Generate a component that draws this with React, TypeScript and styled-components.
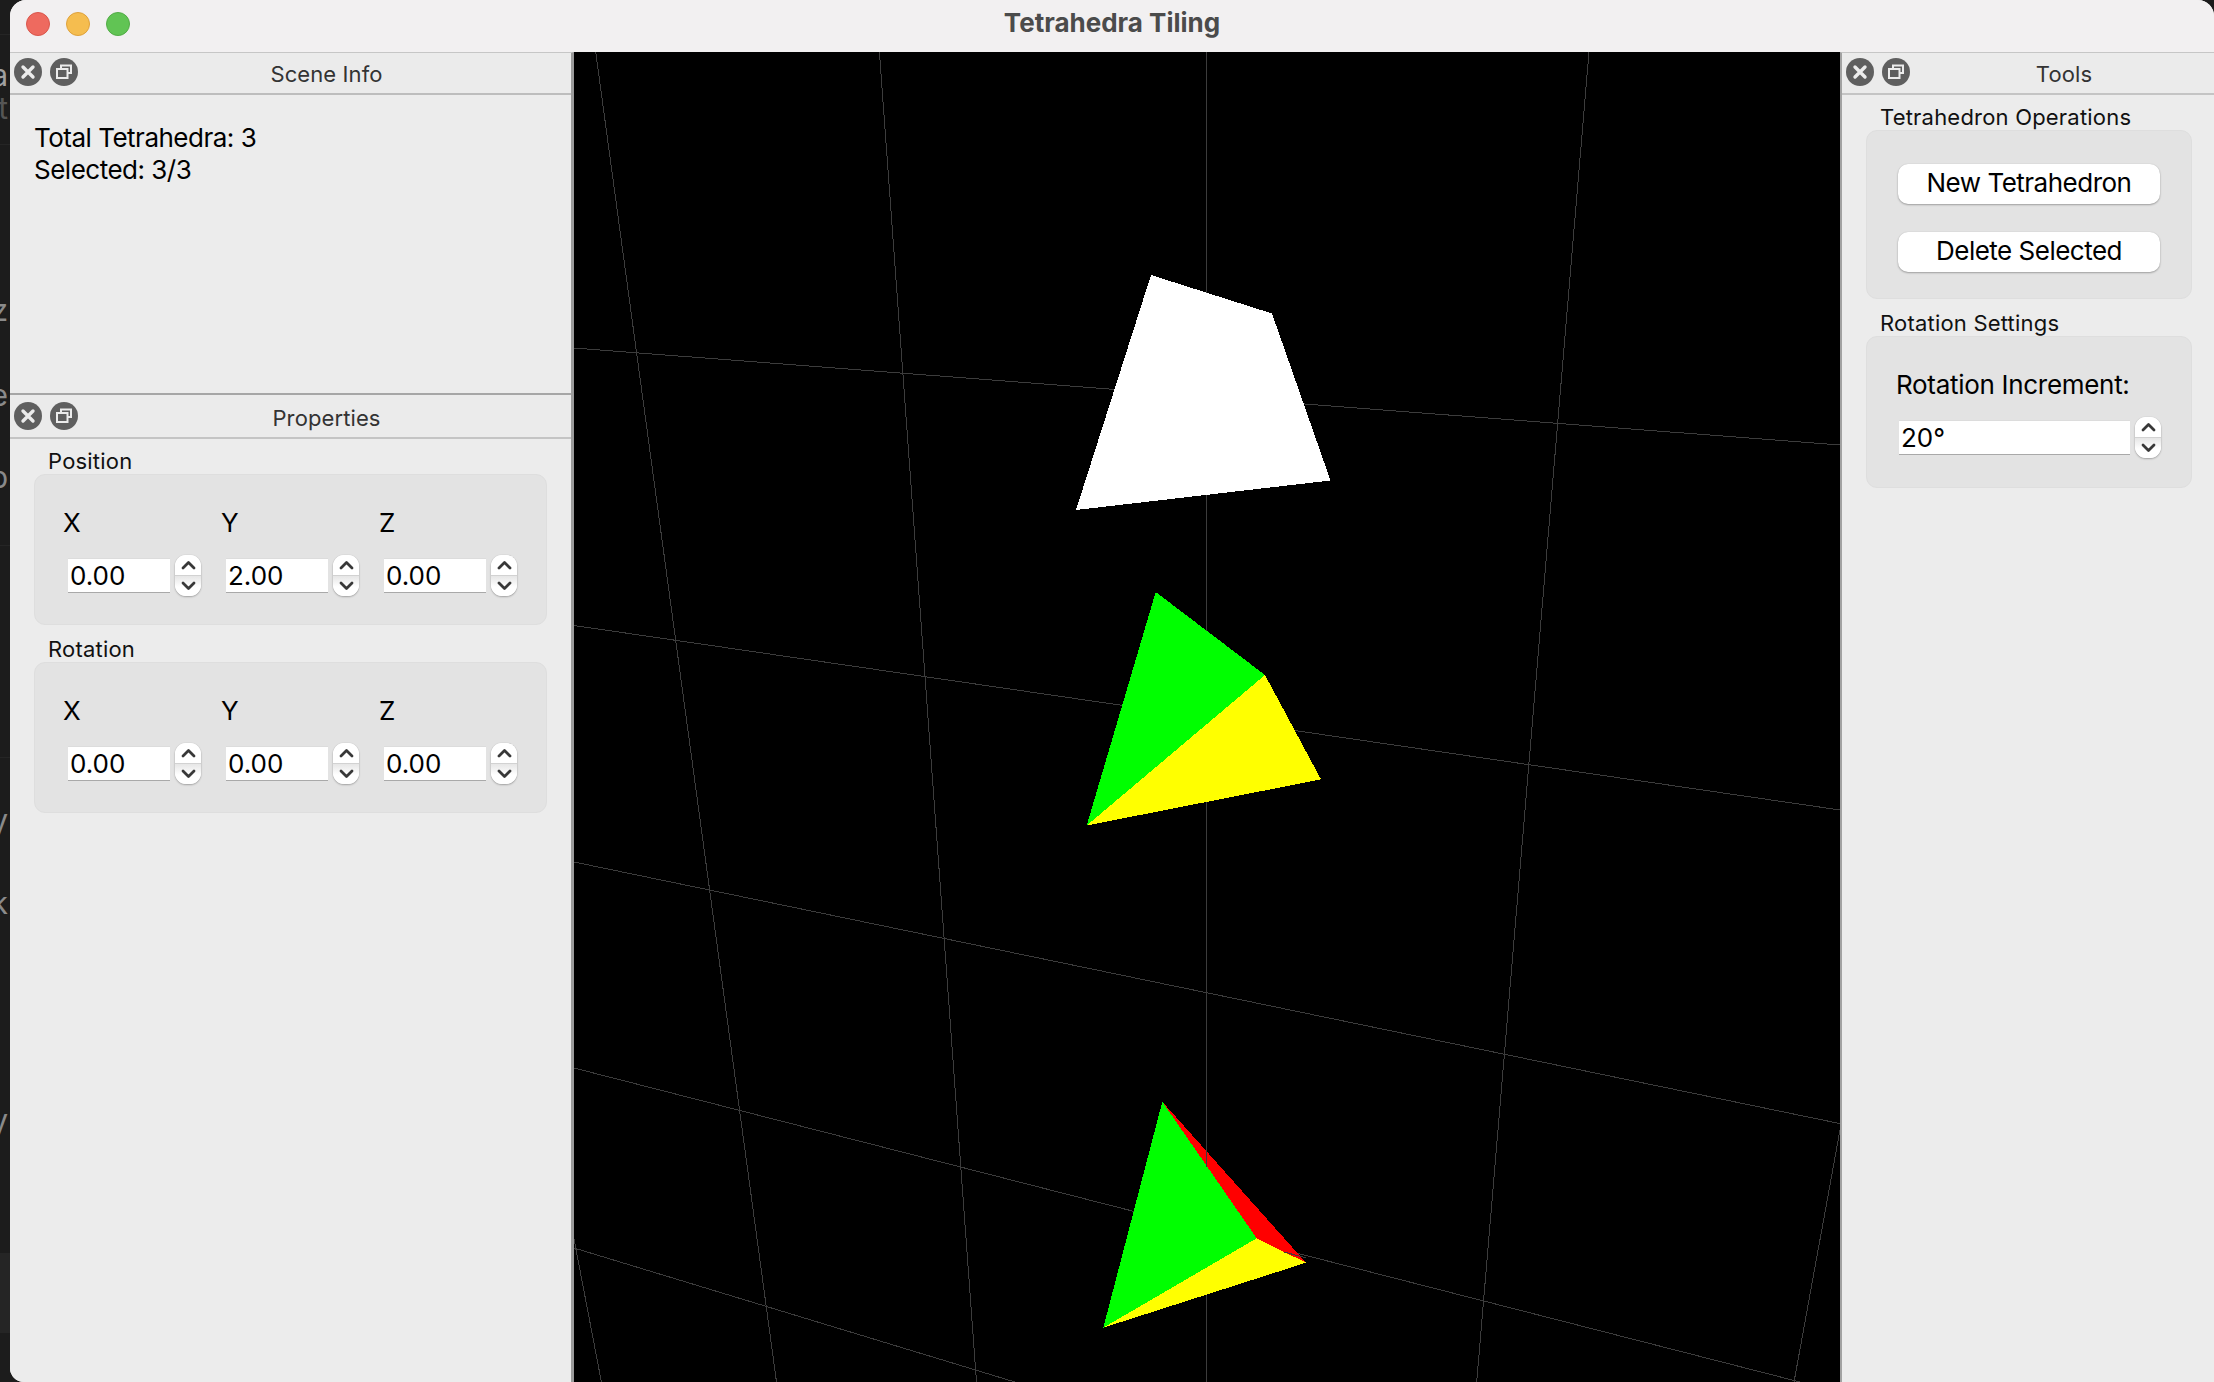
import React from "react";
import styled, { createGlobalStyle } from "styled-components";

const GlobalStyle = createGlobalStyle`
  html, body { margin: 0; padding: 0; background: #1c1c1c; }
  * { box-sizing: border-box; }
  body { font-family: Inter, "Noto Sans", "Liberation Sans", sans-serif; }
`;

const Desktop = styled.div`
  display: flex;
  width: 2214px;
  height: 1382px;
  background: #1c1c1c;
  overflow: hidden;
`;

const BackdropStrip = styled.div`
  position: relative;
  flex: 0 0 10px;
  overflow: hidden;
`;

const BackdropGlyph = styled.span<{ $top: number; $tone: string }>`
  position: absolute;
  right: 2px;
  top: ${(p) => p.$top}px;
  font-size: 30px;
  line-height: 30px;
  color: ${(p) => p.$tone};
`;

const BackdropBand = styled.div<{ $top: number; $height: number }>`
  position: absolute;
  left: 0;
  right: 0;
  top: ${(p) => p.$top}px;
  height: ${(p) => p.$height}px;
  background: #252525;
`;

const Window = styled.div`
  flex: 1;
  min-width: 0;
  display: flex;
  flex-direction: column;
  border-radius: 16px 16px 0 14px;
  overflow: hidden;
  background: #ececec;
`;

const TitleBar = styled.header`
  position: relative;
  flex: 0 0 52px;
  display: flex;
  align-items: center;
  gap: 16px;
  padding: 0 0 4px 16px;
  background: #f2f0f1;
`;

const Light = styled.span<{ $fill: string; $edge: string }>`
  width: 24px;
  height: 24px;
  border-radius: 50%;
  background: ${(p) => p.$fill};
  border: 1px solid ${(p) => p.$edge};
`;

const WindowTitle = styled.h1`
  position: absolute;
  left: 0;
  right: 0;
  top: 8px;
  margin: 0;
  text-align: center;
  font-size: 26px;
  line-height: 30px;
  font-weight: 700;
  color: #4b4b4b;
`;

const Body = styled.div`
  flex: 1;
  min-height: 0;
  display: flex;
`;

const LeftDock = styled.aside`
  flex: 0 0 564px;
  display: flex;
  flex-direction: column;
  background: #ececec;
  border-top: 1px solid #c6c6c6;
  border-right: 3px solid #9b9b9b;
`;

const Viewport = styled.main`
  flex: 0 0 1266px;
  background: #000;
`;

const Scene = styled.svg`
  display: block;
  width: 1266px;
  height: 1330px;
`;

const RightDock = styled.aside`
  flex: 1;
  min-width: 0;
  display: flex;
  flex-direction: column;
  background: #ececec;
  border-top: 1px solid #c6c6c6;
  border-left: 2px solid #a2a2a2;
`;

const DockHead = styled.div<{ $rule: string; $height: number; $lift: number }>`
  position: relative;
  flex: 0 0 ${(p) => p.$height}px;
  display: flex;
  align-items: center;
  gap: 8px;
  padding: 0 0 ${(p) => p.$lift}px 4px;
  background: #ebebeb;
  border-bottom: 2px solid ${(p) => p.$rule};
`;

const DockTitle = styled.div<{ $top: number }>`
  position: absolute;
  top: ${(p) => p.$top}px;
  left: 0;
  right: 0;
  padding-left: 72px;
  text-align: center;
  font-size: 22px;
  line-height: 28px;
  letter-spacing: 0.1px;
  color: #333;
`;

const DockButton = styled.span`
  flex: 0 0 28px;
  height: 28px;
  border-radius: 50%;
  background: #5f5f5f;
  display: flex;
  align-items: center;
  justify-content: center;
`;

const SceneInfoBody = styled.div`
  flex: 0 0 300px;
  padding: 27px 24px 0;
  font-size: 26px;
  line-height: 32px;
  letter-spacing: -0.5px;
  color: #000;
  border-bottom: 2px solid #a6a6a6;
`;

const InfoLine = styled.div`
  white-space: nowrap;
`;

const PanelBody = styled.div<{ $left: number }>`
  flex: 1;
  display: flex;
  flex-direction: column;
  padding: 9px 0 0 ${(p) => p.$left}px;
`;

const GroupLabel = styled.div`
  height: 26px;
  margin-left: 14px;
  font-size: 22px;
  line-height: 26px;
  letter-spacing: 0.2px;
  color: #111;
`;

const GroupBox = styled.section<{ $width: number; $height: number; $gap?: number }>`
  width: ${(p) => p.$width}px;
  height: ${(p) => p.$height}px;
  margin-bottom: ${(p) => p.$gap ?? 11}px;
  background: #e3e3e3;
  border: 1px solid #dedede;
  border-radius: 11px;
`;

const AxisGrid = styled.div`
  display: grid;
  grid-template-columns: repeat(3, 158px);
  padding: 33px 0 0 28px;
`;

const AxisCell = styled.div`
  display: flex;
  flex-direction: column;
`;

const FieldLabel = styled.div`
  height: 30px;
  margin-bottom: 17px;
  font-size: 26px;
  line-height: 30px;
  letter-spacing: -0.3px;
  color: #000;
`;

const FieldRow = styled.div<{ $indent: number }>`
  display: flex;
  align-items: center;
  gap: 5px;
  margin-left: ${(p) => p.$indent}px;
`;

const NumberInput = styled.input<{ $width: number }>`
  width: ${(p) => p.$width}px;
  height: 35px;
  padding: 0 0 0 2px;
  margin: 0;
  border: 0;
  border-bottom: 1px solid #a9a9a9;
  border-top: 1px solid #dcdcdc;
  outline: 0;
  border-radius: 0;
  background: #fff;
  font: inherit;
  font-size: 26px;
  line-height: 33px;
  color: #000;
`;

const SpinnerShell = styled.div`
  flex: 0 0 26px;
  height: 41px;
  display: flex;
  flex-direction: column;
  border-radius: 11px;
  overflow: hidden;
  background: #fff;
  box-shadow: 0 1px 2px rgba(0, 0, 0, 0.28), 0 0 1px rgba(0, 0, 0, 0.2);
`;

const SpinnerHalf = styled.div<{ $lower?: boolean }>`
  flex: 1;
  display: flex;
  align-items: center;
  justify-content: center;
  background: ${(p) => (p.$lower ? "linear-gradient(#e6e6e6, #fff 55%)" : "#fff")};
  border-top: ${(p) => (p.$lower ? "1px solid #d2d2d2" : "0")};
`;

const ButtonStack = styled.div`
  display: flex;
  flex-direction: column;
  gap: 28px;
  padding: 33px 0 0 31px;
`;

const ActionButton = styled.button`
  width: 262px;
  height: 40px;
  padding: 0 0 2px;
  border: 0;
  border-radius: 10px;
  background: #fff;
  box-shadow: 0 1px 2px rgba(0, 0, 0, 0.3), 0 0 1px rgba(0, 0, 0, 0.15);
  font: inherit;
  font-size: 26px;
  line-height: 38px;
  letter-spacing: -0.5px;
  color: #000;
`;

const SettingBlock = styled.div`
  display: flex;
  flex-direction: column;
  padding: 33px 0 0 29px;
`;

const gridLines = [
  [595.7, 52, 776.5, 1382],
  [879.4, 52, 976.5, 1382],
  [1206, 52, 1206, 1382],
  [1589, 52, 1476.7, 1382],
  [1840, 1130, 1794, 1382],
  [574, 1239, 601.4, 1382],
  [574, 348, 1840, 445],
  [574, 625.5, 1840, 810],
  [574, 862, 1840, 1123.6],
  [574, 1068, 1800, 1382],
  [574, 1248, 1015, 1382],
];

const facets: [string, string][] = [
  ["1151,275 1272,313.5 1330.5,480.5 1076,510", "#ffffff"],
  ["1155.7,592 1265,675 1086.7,825.5", "#00ff00"],
  ["1265,675 1321,779.4 1086.7,825.5", "#ffff00"],
  ["1162.3,1101.7 1306,1262.7 1256.7,1238.3", "#ff0000"],
  ["1162.3,1101.7 1256.7,1238.3 1103.3,1327.7", "#00ff00"],
  ["1256.7,1238.3 1306,1262.7 1103.3,1327.7", "#ffff00"],
];

const overlayLines = [
  [1206, 1150, 1206, 1167],
  [1283.7, 1252, 1306, 1257.7],
];

const SceneView = () => (
  <Scene viewBox="574 52 1266 1330" shapeRendering="crispEdges">
    {gridLines.map(([x1, y1, x2, y2], i) => (
      <line key={i} x1={x1} y1={y1} x2={x2} y2={y2} stroke="#3c3c3c" strokeWidth={1} />
    ))}
    {facets.map(([points, fill], i) => (
      <polygon key={i} points={points} fill={fill} />
    ))}
    {overlayLines.map(([x1, y1, x2, y2], i) => (
      <line key={i} x1={x1} y1={y1} x2={x2} y2={y2} stroke="#3c3c3c" strokeWidth={1} />
    ))}
  </Scene>
);

const CloseGlyph = () => (
  <svg width="16" height="16" viewBox="0 0 16 16">
    <path d="M3 3 L13 13 M13 3 L3 13" stroke="#ececec" strokeWidth="3.4" strokeLinecap="round" />
  </svg>
);

const FloatGlyph = () => (
  <svg width="18" height="18" viewBox="0 0 18 18" fill="none" stroke="#ececec" strokeWidth="2">
    <path d="M6 5 V2.5 H16 V10 H12.5" />
    <rect x="2" y="6" width="10.5" height="9" />
  </svg>
);

const DockButtons = () => (
  <>
    <DockButton>
      <CloseGlyph />
    </DockButton>
    <DockButton>
      <FloatGlyph />
    </DockButton>
  </>
);

const Chevron = ({ up }: { up?: boolean }) => (
  <svg width="15" height="10" viewBox="0 0 15 10" fill="none">
    <path
      d={up ? "M2 8 L7.5 2.5 L13 8" : "M2 2 L7.5 7.5 L13 2"}
      stroke="#383838"
      strokeWidth="2.8"
      strokeLinecap="round"
      strokeLinejoin="round"
    />
  </svg>
);

const Spinner = () => (
  <SpinnerShell>
    <SpinnerHalf>
      <Chevron up />
    </SpinnerHalf>
    <SpinnerHalf $lower>
      <Chevron />
    </SpinnerHalf>
  </SpinnerShell>
);

const AxisGroup = ({ title, values }: { title: string; values: string[] }) => (
  <>
    <GroupLabel>{title}</GroupLabel>
    <GroupBox $width={513} $height={151}>
      <AxisGrid>
        {["X", "Y", "Z"].map((axis, i) => (
          <AxisCell key={axis}>
            <FieldLabel>{axis}</FieldLabel>
            <FieldRow $indent={5}>
              <NumberInput $width={102} readOnly value={values[i]} />
              <Spinner />
            </FieldRow>
          </AxisCell>
        ))}
      </AxisGrid>
    </GroupBox>
  </>
);

const backdropGlyphs: [string, number, string][] = [
  ["a", 60, "#a0a0a0"],
  ["t", 93, "#555"],
  ["z", 295, "#8a8a8a"],
  ["e", 380, "#8a8a8a"],
  ["p", 462, "#8a8a8a"],
  ["y", 805, "#8a8a8a"],
  ["k", 888, "#8a8a8a"],
  ["y", 1105, "#8a8a8a"],
];

export default function App() {
  return (
    <>
      <GlobalStyle />
      <Desktop>
        <BackdropStrip>
          <BackdropBand $top={34} $height={1} />
          <BackdropBand $top={144} $height={1} />
          <BackdropBand $top={545} $height={1} />
          <BackdropBand $top={757} $height={1} />
          <BackdropBand $top={1253} $height={80} />
          {backdropGlyphs.map(([ch, top, tone]) => (
            <BackdropGlyph key={top} $top={top} $tone={tone}>
              {ch}
            </BackdropGlyph>
          ))}
        </BackdropStrip>
        <Window>
          <TitleBar>
            <Light $fill="#ee6a5f" $edge="#d9564c" />
            <Light $fill="#f5bd4f" $edge="#dea13c" />
            <Light $fill="#61c454" $edge="#52ab46" />
            <WindowTitle>Tetrahedra Tiling</WindowTitle>
          </TitleBar>
          <Body>
            <LeftDock>
              <DockHead $rule="#bdbdbd" $height={42} $lift={2}>
                <DockButtons />
                <DockTitle $top={7}>Scene Info</DockTitle>
              </DockHead>
              <SceneInfoBody>
                <InfoLine>Total Tetrahedra: 3</InfoLine>
                <InfoLine>Selected: 3/3</InfoLine>
              </SceneInfoBody>
              <DockHead $rule="#c4c4c4" $height={44} $lift={0}>
                <DockButtons />
                <DockTitle $top={9}>Properties</DockTitle>
              </DockHead>
              <PanelBody $left={24}>
                <AxisGroup title="Position" values={["0.00", "2.00", "0.00"]} />
                <AxisGroup title="Rotation" values={["0.00", "0.00", "0.00"]} />
              </PanelBody>
            </LeftDock>
            <Viewport>
              <SceneView />
            </Viewport>
            <RightDock>
              <DockHead $rule="#c4c4c4" $height={42} $lift={2}>
                <DockButtons />
                <DockTitle $top={7}>Tools</DockTitle>
              </DockHead>
              <PanelBody $left={24}>
                <GroupLabel>Tetrahedron Operations</GroupLabel>
                <GroupBox $width={326} $height={169}>
                  <ButtonStack>
                    <ActionButton>New Tetrahedron</ActionButton>
                    <ActionButton>Delete Selected</ActionButton>
                  </ButtonStack>
                </GroupBox>
                <GroupLabel>Rotation Settings</GroupLabel>
                <GroupBox $width={326} $height={152}>
                  <SettingBlock>
                    <FieldLabel>Rotation Increment:</FieldLabel>
                    <FieldRow $indent={3}>
                      <NumberInput $width={231} readOnly value="20°" />
                      <Spinner />
                    </FieldRow>
                  </SettingBlock>
                </GroupBox>
              </PanelBody>
            </RightDock>
          </Body>
        </Window>
      </Desktop>
    </>
  );
}
